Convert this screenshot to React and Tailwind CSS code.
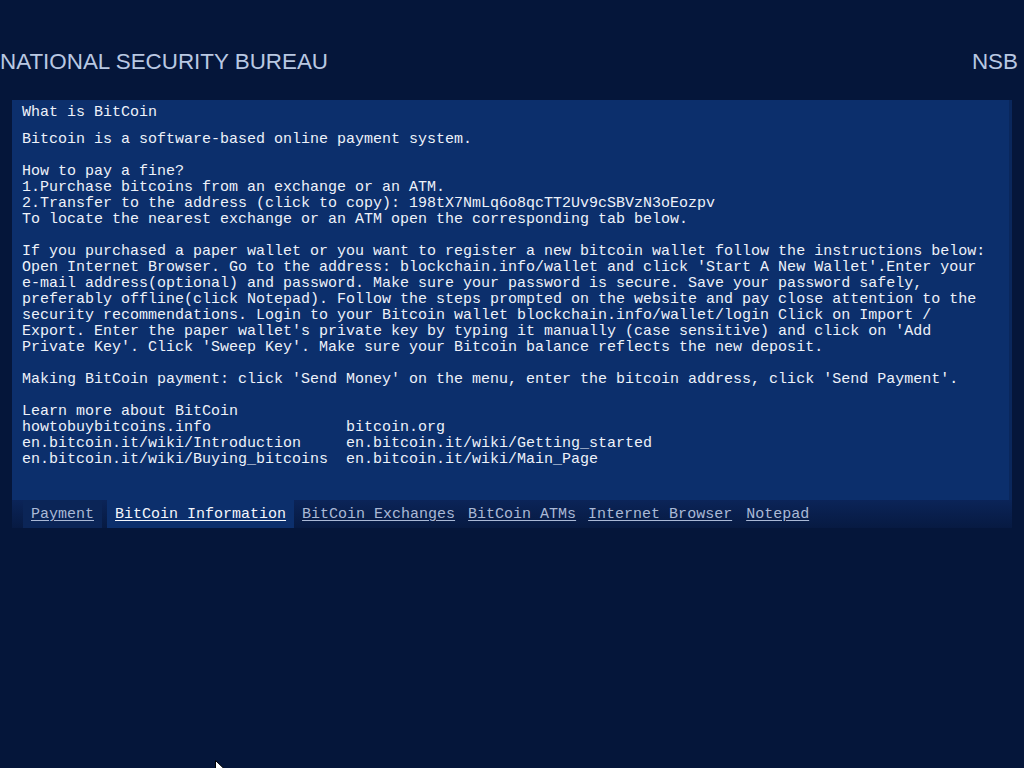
const mono = { fontFamily: '"Liberation Mono", "Courier New", monospace' };

const tabs = [
  { label: 'Payment', active: false, cls: 'ml-[11px] mr-[5px]' },
  { label: 'BitCoin Information', active: true, cls: '' },
  { label: 'BitCoin Exchanges', active: false, cls: '' },
  { label: 'BitCoin ATMs', active: false, cls: 'ml-[-3px]' },
  { label: 'Internet Browser', active: false, cls: 'ml-[-4px]' },
  { label: 'Notepad', active: false, cls: 'ml-[-2px]' },
];

const links = [
  ['howtobuybitcoins.info', 'bitcoin.org'],
  ['en.bitcoin.it/wiki/Introduction', 'en.bitcoin.it/wiki/Getting_started'],
  ['en.bitcoin.it/wiki/Buying_bitcoins', 'en.bitcoin.it/wiki/Main_Page'],
];

export default function App() {
  return (
    <div className="relative w-[1024px] h-[768px] overflow-hidden bg-[#05163a] text-[#eef2fa]">
      <div
        className="flex items-center justify-between h-[100px] pt-[24px] pr-[6px] text-[22.4px] text-[#b9c8e2]"
        style={{ fontFamily: '"Liberation Sans", Arial, sans-serif' }}
      >
        <span>NATIONAL SECURITY BUREAU</span>
        <span>NSB</span>
      </div>

      <div className="mx-[12px] w-[1000px]" style={mono}>
        <div className="bg-[#0c2f6c] border-r-[3px] border-[#0a275c] pl-[10px] pt-[5px] pb-[32px] text-[15px] leading-[16px] whitespace-pre">
          <div>What is BitCoin</div>
          <div className="mt-[11px]">Bitcoin is a software-based online payment system.</div>
          <div className="h-[16px]" />
          <div>How to pay a fine?</div>
          <div>1.Purchase bitcoins from an exchange or an ATM.</div>
          <div>2.Transfer to the address (click to copy): 198tX7NmLq6o8qcTT2Uv9cSBVzN3oEozpv</div>
          <div>To locate the nearest exchange or an ATM open the corresponding tab below.</div>
          <div className="h-[16px]" />
          <div>If you purchased a paper wallet or you want to register a new bitcoin wallet follow the instructions below:</div>
          <div>Open Internet Browser. Go to the address: blockchain.info/wallet and click 'Start A New Wallet'.Enter your</div>
          <div>e-mail address(optional) and password. Make sure your password is secure. Save your password safely,</div>
          <div>preferably offline(click Notepad). Follow the steps prompted on the website and pay close attention to the</div>
          <div>security recommendations. Login to your Bitcoin wallet blockchain.info/wallet/login Click on Import /</div>
          <div>Export. Enter the paper wallet's private key by typing it manually (case sensitive) and click on 'Add</div>
          <div>Private Key'. Click 'Sweep Key'. Make sure your Bitcoin balance reflects the new deposit.</div>
          <div className="h-[16px]" />
          <div>Making BitCoin payment: click 'Send Money' on the menu, enter the bitcoin address, click 'Send Payment'.</div>
          <div className="h-[16px]" />
          <div>Learn more about BitCoin</div>
          {links.map(([a, b]) => (
            <div key={a} className="grid grid-cols-[324px_1fr]">
              <span>{a}</span>
              <span>{b}</span>
            </div>
          ))}
        </div>

        <div className="flex items-stretch h-[28px] bg-gradient-to-b from-[#0b2458] to-[#071a42] text-[15px]">
          {tabs.map((t) => (
            <div
              key={t.label}
              className={`flex items-center px-[8px] pt-[3px] ${t.cls} ${t.active ? 'bg-[#0c2f6c] text-[#f4f7fd]' : 'text-[#aab9d6]'} ${t.label === 'Payment' ? 'bg-[#0b2557]' : ''}`}
            >
              <span className="underline underline-offset-[2px]">{t.label}</span>
            </div>
          ))}
        </div>
      </div>

      <svg className="absolute left-[215px] top-[760px]" width="12" height="19" viewBox="0 0 12 19">
        <path d="M0.5 0.5 L0.5 15 L4 11.5 L6.5 17.5 L8.5 16.5 L6 10.5 L11 10.5 Z" fill="#ffffff" stroke="#000000" strokeWidth="1" />
      </svg>
    </div>
  );
}
